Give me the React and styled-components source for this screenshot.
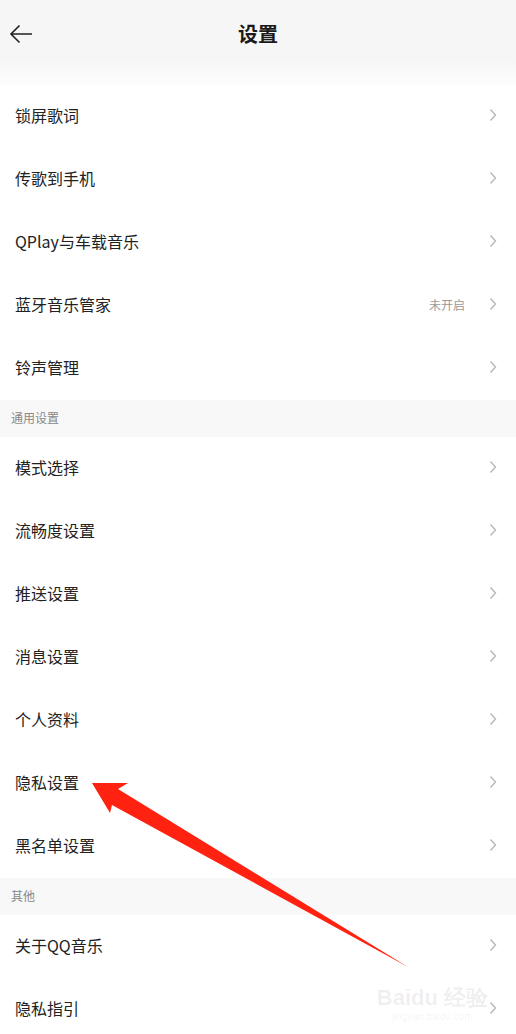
import { createGlobalStyle, styled } from 'styled-components';

const Global = createGlobalStyle`
  body {
    margin: 0;
    background: #fff;
    font-family: "Noto Sans CJK SC", "Noto Sans", sans-serif;
  }
`;

const Page = styled.div`
  position: relative;
  width: 516px;
  height: 1034px;
  overflow: hidden;
  background: #fff;
`;

const Header = styled.div`
  box-sizing: border-box;
  height: 62px;
  padding-top: 5px;
  display: grid;
  grid-template-columns: 60px 1fr 60px;
  align-items: center;
  background: #f6f6f6;
`;

const Back = styled.div`
  padding-left: 9px;
  display: flex;
  align-items: center;
`;

const Title = styled.h1`
  margin: 0;
  text-align: center;
  font-size: 20px;
  font-weight: bold;
  color: #1a1a1a;
`;

const Spacer = styled.div`
  height: 23px;
  background: linear-gradient(#f7f7f7, #fdfdfd);
`;

const Row = styled.div`
  box-sizing: border-box;
  height: 63px;
  display: flex;
  align-items: center;
  padding: 0 19px 3px 15px;
  background: #fff;
`;

const Label = styled.span`
  flex: 1;
  font-size: 16px;
  color: #222;
`;

const Extra = styled.span`
  font-size: 12px;
  color: #999;
  margin-right: 24px;
`;

const Section = styled.div`
  box-sizing: border-box;
  height: 37px;
  display: flex;
  align-items: center;
  padding: 0 0 2px 11px;
  background: #f8f8f8;
  font-size: 12px;
  color: #888;
`;

const Mark = styled.div`
  position: absolute;
  right: 28px;
  bottom: 12px;
  color: rgba(0, 0, 0, 0.07);
  font-family: "Liberation Sans", sans-serif;
  text-align: center;
  line-height: 1;
  span {
    font-size: 22px;
    font-weight: bold;
  }
  small {
    display: block;
    font-size: 10px;
    margin-top: 3px;
  }
`;

const Overlay = styled.svg`
  position: absolute;
  left: 0;
  top: 0;
  pointer-events: none;
`;

const Chevron = () => (
  <svg width="8" height="14" viewBox="0 0 8 14">
    <path d="M1.5 1.5 L6.5 7 L1.5 12.5" fill="none" stroke="#b8b8b8" strokeWidth="1.4" />
  </svg>
);

const Item = ({ label, extra }) => (
  <Row>
    <Label>{label}</Label>
    {extra && <Extra>{extra}</Extra>}
    <Chevron />
  </Row>
);

const top = [
  { label: '锁屏歌词' },
  { label: '传歌到手机' },
  { label: 'QPlay与车载音乐' },
  { label: '蓝牙音乐管家', extra: '未开启' },
  { label: '铃声管理' },
];

const general = ['模式选择', '流畅度设置', '推送设置', '消息设置', '个人资料', '隐私设置', '黑名单设置'];
const other = ['关于QQ音乐', '隐私指引'];

export default function App() {
  return (
    <Page>
      <Global />
      <Header>
        <Back>
          <svg width="24" height="20" viewBox="0 0 24 20">
            <path d="M23 10 H2 M10.5 1.5 L2 10 L10.5 18.5" fill="none" stroke="#222" strokeWidth="1.6" />
          </svg>
        </Back>
        <Title>设置</Title>
        <div />
      </Header>
      <Spacer />
      {top.map((it) => (
        <Item key={it.label} {...it} />
      ))}
      <Section>通用设置</Section>
      {general.map((l) => (
        <Item key={l} label={l} />
      ))}
      <Section>其他</Section>
      {other.map((l) => (
        <Item key={l} label={l} />
      ))}
      <Mark>
        <span>Baidu 经验</span>
        <small>jingyan.baidu.com</small>
      </Mark>
      <Overlay width="516" height="1034" viewBox="0 0 516 1034">
        <polygon
          points="92,783 128,783 118,789 408,967 112,805 110,813"
          fill="#ff2211"
        />
      </Overlay>
    </Page>
  );
}
